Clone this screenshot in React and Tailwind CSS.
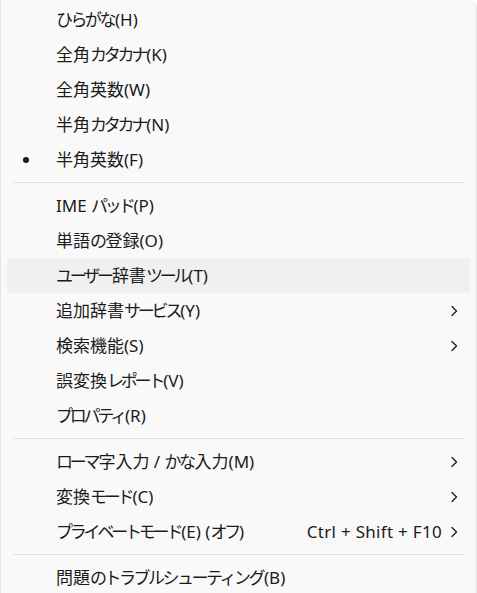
const groups = [
  [
    { label: 'ひらがな(H)' },
    { label: '全角カタカナ(K)' },
    { label: '全角英数(W)' },
    { label: '半角カタカナ(N)' },
    { label: '半角英数(F)', checked: true },
  ],
  [
    { label: 'IME パッド(P)' },
    { label: '単語の登録(O)' },
    { label: 'ユーザー辞書ツール(T)', hover: true },
    { label: '追加辞書サービス(Y)', sub: true },
    { label: '検索機能(S)', sub: true },
    { label: '誤変換レポート(V)' },
    { label: 'プロパティ(R)' },
  ],
  [
    { label: 'ローマ字入力 / かな入力(M)', sub: true },
    { label: '変換モード(C)', sub: true },
    { label: 'プライベートモード(E) (オフ)', shortcut: 'Ctrl + Shift + F10', sub: true },
  ],
  [
    { label: '問題のトラブルシューティング(B)' },
  ],
];

// kana in the reference font are proportional, so tighten kana runs
const KANA = /([\u3040-\u30ff]+)/;
const KATA = /[\u30a0-\u30ff]/;

function Label({ text }) {
  return text.split(KANA).map((part, i) => {
    if (!part) return null;
    if (!/[\u3040-\u30ff]/.test(part)) return <span key={i}>{part}</span>;
    return KATA.test(part[0])
      ? <span key={i} className="tracking-[-3.2px] mr-[1px]">{part}</span>
      : <span key={i} className="tracking-[-2.5px] mr-[1px]">{part}</span>;
  });
}

function Chevron() {
  return (
    <svg width="8" height="12" viewBox="0 0 8 12" className="shrink-0">
      <path d="M2 1.5 L6.5 6 L2 10.5" fill="none" stroke="#1b1b1b" strokeWidth="1.3" strokeLinecap="round" strokeLinejoin="round" />
    </svg>
  );
}

function Row({ item }) {
  return (
    <div className={`mx-[6px] h-[35px] flex items-center rounded-[4px] ${item.hover ? 'bg-[#f0f0f0]' : ''}`}>
      <div className="w-[49px] shrink-0 flex justify-center">
        {item.checked && <span className="w-[6px] h-[6px] rounded-full bg-[#1b1b1b] mr-[11px]" />}
      </div>
      <span className="flex-1 truncate"><Label text={item.label} /></span>
      {item.shortcut && <span className="mr-[8px] tracking-[0.3px]">{item.shortcut}</span>}
      <div className="w-[20px] shrink-0 flex items-center">
        {item.sub && <Chevron />}
      </div>
    </div>
  );
}

export default function App() {
  return (
    <div className="w-[477px] h-[593px] bg-white overflow-hidden">
      <div
        className={'w-[477px] min-h-[600px] bg-[#f9f9f9] border-l border-r border-[#e3e3e3] rounded-tr-[8px] pt-[2px] text-[17px] leading-[24px] text-[#1b1b1b] font-["Noto_Sans","Noto_Sans_CJK_JP",sans-serif]'}
      >
        {groups.map((g, gi) => (
          <div key={gi}>
            {gi > 0 && <div className="mx-[12px] my-[5px] h-px bg-[#e0e0e0]" />}
            {g.map((item) => <Row key={item.label} item={item} />)}
          </div>
        ))}
      </div>
    </div>
  );
}
